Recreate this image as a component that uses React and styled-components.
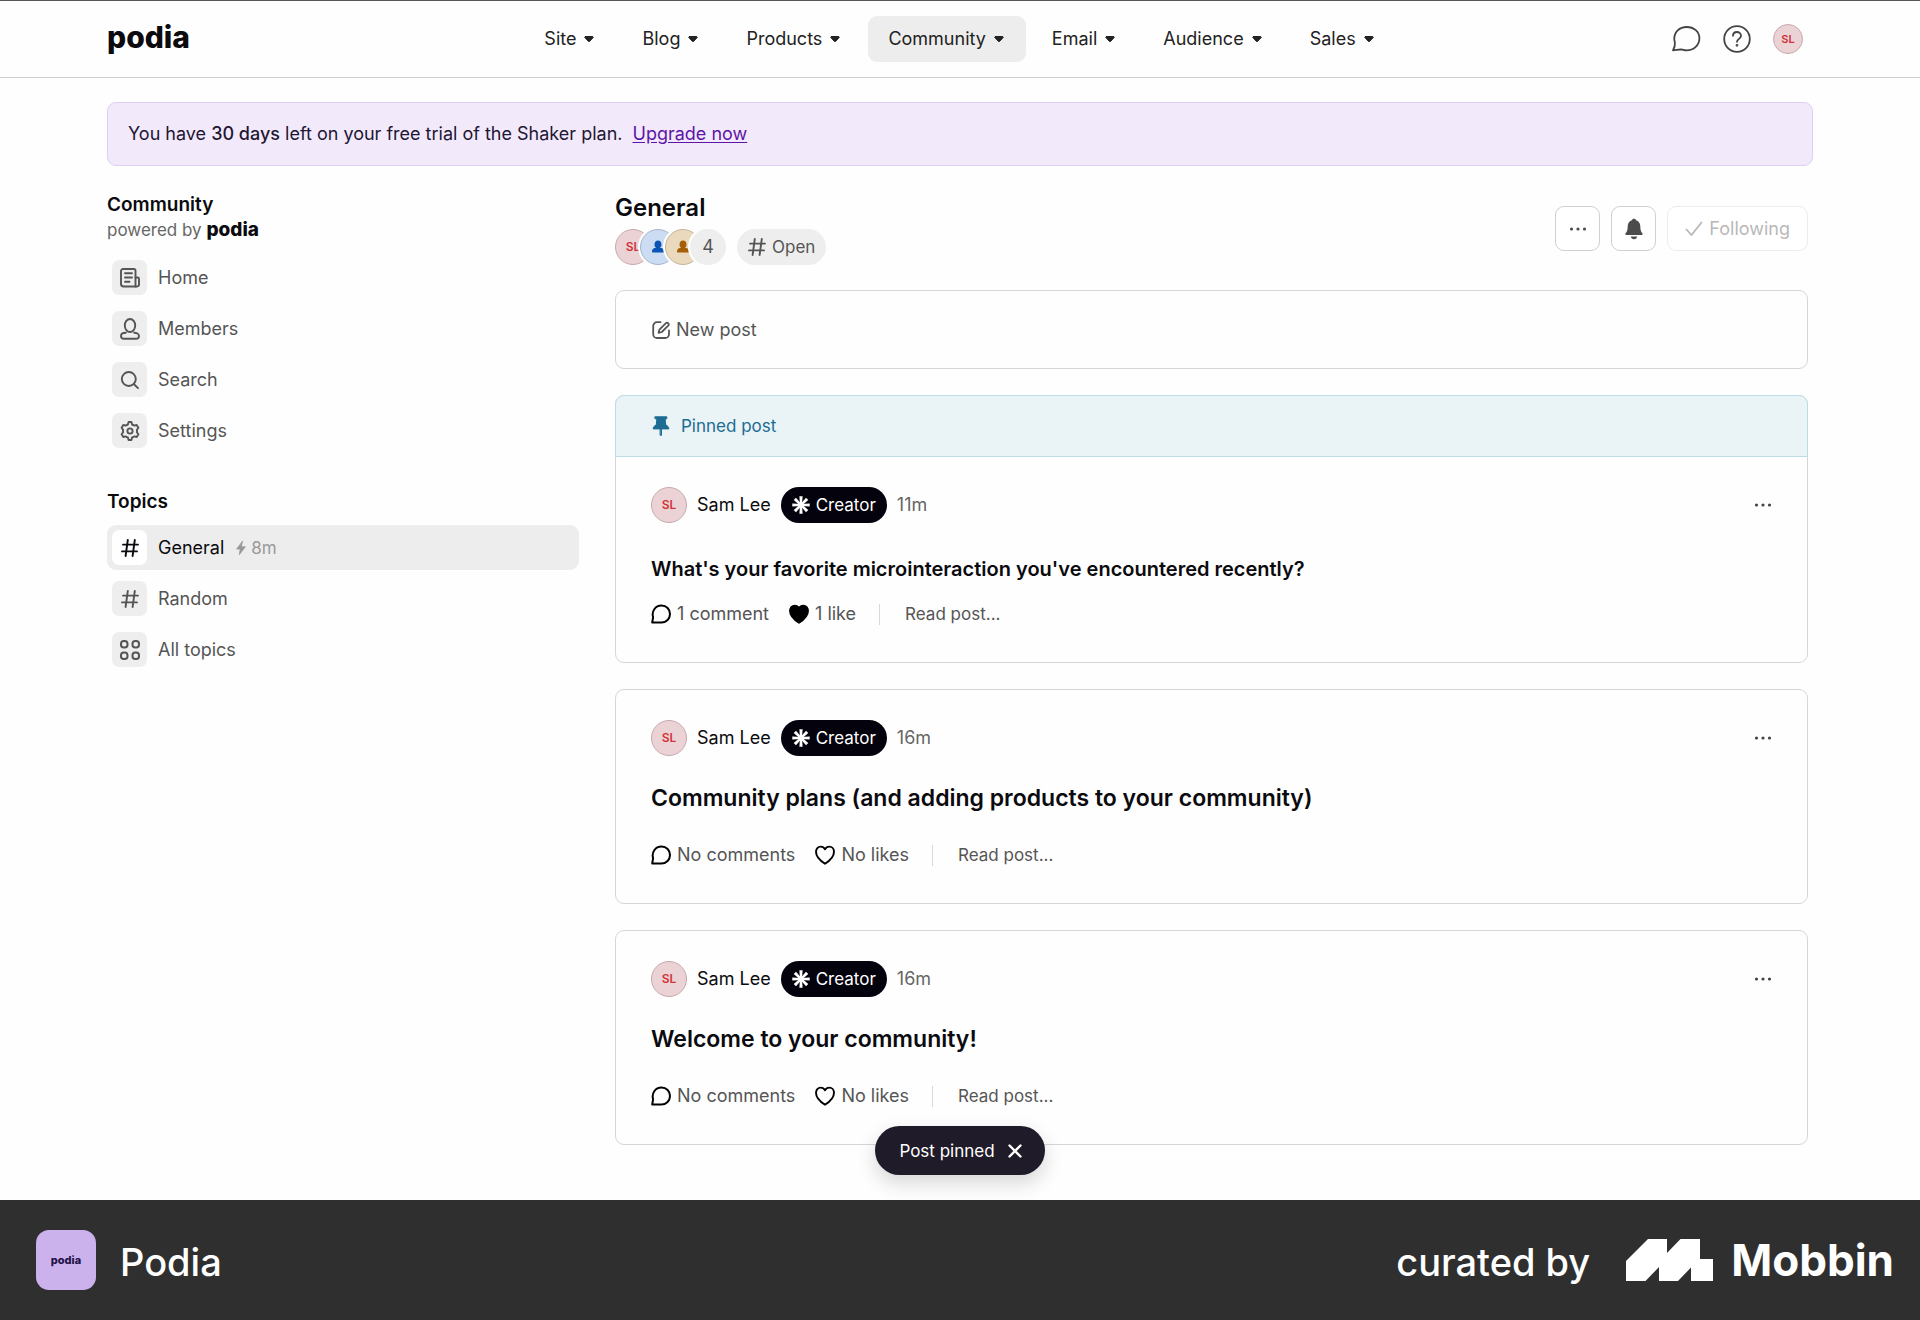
import React, { useState } from "react";
import styled, { createGlobalStyle } from "styled-components";

const Svg = ({ w = 24, h = w, box = "0 0 24 24", sw = 2, children }) => (
  <svg
    width={w}
    height={h}
    viewBox={box}
    fill="none"
    stroke="currentColor"
    strokeWidth={sw}
    strokeLinecap="round"
    strokeLinejoin="round"
    aria-hidden="true"
  >
    {children}
  </svg>
);

const CaretIcon = () => (
  <Svg w={10} h={8} box="0 0 10 8" sw={1}>
    <path fill="currentColor" d="M1.6 1.500h6.800c.7 0 1 .6.7 1.100L5.600 6.400c-.4.4-.9.4-1.200 0L.9 2.600C.6 2.100.9 1.500 1.600 1.500z" />
  </Svg>
);

const ChatIcon = () => (
  <Svg w={30} h={28} box="0 0 30 28" sw={1.8}>
    <path d="M3.3 14.3C3 7 8.5 2 15.7 2c7.2 0 12.7 4.6 12.7 11.2 0 6.9-5.6 12.2-12.9 12.2-2.3 0-3.4-.8-5.3-.9-2.3-.1-4.9.6-8.2.9 1.7-3.3 2.2-4.6 1.9-7.3-.1-1.300-.5-2.100-.6-3.800z" />
  </Svg>
);

const HelpIcon = () => (
  <Svg w={28} box="0 0 28 28" sw={1.8}>
    <circle cx="14" cy="14" r="12.8" />
    <path d="M10 10.8c0-2.200 1.700-3.800 4-3.800s4 1.600 4 3.700c0 3-4 3.300-4 6.100" />
    <circle cx="14" cy="20.300" r=".5" fill="currentColor" />
  </Svg>
);

const NewsIcon = () => (
  <Svg w={20} box="0 0 20 20" sw={1.9}>
    <path d="M3 1h11a1.500 1.500 0 0 1 1.500 1.500V18.500H3.500A2.500 2.500 0 0 1 1 16V3a2 2 0 0 1 2-2z" />
    <path d="M15.500 9.500h2a1.500 1.500 0 0 1 1.500 1.500v5a2 2 0 0 1-2 2.500h-1.500" />
    <path d="M5 5.300h7M5 9.500h7M5 13.700h4.500" />
  </Svg>
);

const MemberIcon = () => (
  <Svg w={20} h={22} box="0 0 20 22" sw={1.9}>
    <ellipse cx="10" cy="7.500" rx="5.200" ry="6.500" />
    <path d="M5.800 14.800C3.500 14.800 1 15.700 1 18c0 1.800 1 2.800 3 2.800h12c2 0 3-1 3-2.800 0-2.300-2.500-3.200-4.800-3.200" />
  </Svg>
);

const SearchIcon = () => (
  <Svg w={20} box="0 0 20 20" sw={1.9}>
    <circle cx="8.800" cy="9" r="7" />
    <path d="M14 14.200l4 3.900" />
  </Svg>
);

const GearIcon = () => (
  <Svg w={20} box="0 0 20 20" sw={1.9}>
    <circle cx="10" cy="10" r="2.600" />
    <path d="M8.600 1h2.800l.7 2.500c.9.300 1.400.6 2.100 1.100l2.500-.6 1.700 2.700-1.500 2c.2 1 .2 1.600 0 2.600l1.500 2-1.700 2.700-2.500-.6c-.7.500-1.200.8-2.100 1.100L11.400 19H8.600l-.7-2.500c-.9-.3-1.400-.6-2.100-1.100l-2.500.6-1.700-2.700 1.500-2c-.2-1-.2-1.600 0-2.600l-1.500-2L3.300 4l2.500.6c.7-.5 1.200-.8 2.100-1.100z" />
  </Svg>
);

const HashIcon = () => (
  <Svg w={18} box="0 0 18 18" sw={1.9}>
    <path d="M6.800 1L4.600 17M13.800 1l-2.200 16M2 5.600h15M1 12.400h15" />
  </Svg>
);

const TopicsIcon = () => (
  <Svg w={20} box="0 0 20 20" sw={2}>
    <rect x="1" y="1" width="6.500" height="6.500" rx="2.800" />
    <rect x="12.500" y="1" width="6.500" height="6.500" rx="2.800" />
    <rect x="1" y="12.500" width="6.500" height="6.500" rx="2.800" />
    <rect x="12.500" y="12.500" width="6.500" height="6.500" rx="2.800" />
  </Svg>
);

const BoltIcon = () => (
  <Svg w={10} h={14} box="0 0 10 14" sw={0.8}>
    <path fill="currentColor" d="M6.300.4L.6 8h3.600l-.8 5.600L9.400 5.800H5.600z" />
  </Svg>
);

const DotsIcon = () => (
  <Svg w={18} h={4} box="0 0 18 4" sw={0}>
    <g fill="currentColor">
      <circle cx="2.500" cy="2" r="1.600" />
      <circle cx="9" cy="2" r="1.600" />
      <circle cx="15.500" cy="2" r="1.600" />
    </g>
  </Svg>
);

const BellIcon = () => (
  <Svg w={18} h={22} box="0 0 18 22" sw={0}>
    <path
      fill="currentColor"
      d="M9 .8c1 0 1.800.6 2.100 1.400 2.500.8 4.200 3 4.200 5.900 0 3.900.6 5.500 2.100 7.200.6.700.2 1.600-.6 1.600H1.200c-.8 0-1.200-.9-.6-1.600 1.500-1.700 2.100-3.300 2.100-7.200 0-2.900 1.700-5.100 4.200-5.900C7.200 1.400 8 .8 9 .8zM5.800 18.500h6.400c-.2 1.600-1.500 2.700-3.200 2.700s-3-1.100-3.200-2.700z"
    />
  </Svg>
);

const CheckIcon = () => (
  <Svg w={18} h={16} box="0 0 18 16" sw={1.8}>
    <path d="M1.500 8.500l5 5.500L16.500 1.500" />
  </Svg>
);

const ComposeIcon = () => (
  <Svg w={18} box="0 0 18 18" sw={1.8}>
    <path d="M8.500 1.200H5A3.800 3.800 0 0 0 1.200 5v8.200A3.800 3.800 0 0 0 5 17h8.200a3.800 3.800 0 0 0 3.800-3.800V9.500" />
    <path d="M6.600 11.800l.8-3.200 6.300-6.300a1.700 1.700 0 0 1 2.500 2.400L9.800 11z" />
  </Svg>
);

const PinIcon = () => (
  <Svg w={18} h={20} box="0 0 18 20" sw={1}>
    <path fill="currentColor" d="M3.200.8h11.600v1.800l-1.600.9.500 5.500c2 .7 3 2 3.200 3.900H1.100C1.300 11 2.300 9.700 4.300 9l.5-5.500-1.600-.9zM8.500 13h1v6.300h-1z" />
  </Svg>
);

const StarIcon = () => (
  <Svg w={18} box="0 0 18 18" sw={0}>
    <g fill="currentColor">
      {[0, 45, 90, 135, 180, 225, 270, 315].map((deg) => (
        <path key={deg} transform={`rotate(${deg} 9 9)`} d="M8 9L7.400.3h3.200L10 9z" />
      ))}
    </g>
  </Svg>
);

const CommentIcon = () => (
  <Svg w={20} box="0 0 20 20" sw={2}>
    <path d="M1.200 18.500l.9-5.200C.3 7.500 4.300 1.600 10.500 1.600c5 0 8.500 3.800 8.500 8.400 0 4.700-3.600 8.500-8.500 8.500z" />
  </Svg>
);

const HeartIcon = ({ filled }) => (
  <Svg w={20} box="0 0 20 20" sw={1.9}>
    <path
      fill={filled ? "currentColor" : "none"}
      d="M10 18.800C7 16.900 1 12.300 1 6.800 1 3.900 3 1.600 5.600 1.600c2 0 3.600 1.100 4.400 2.600.8-1.500 2.400-2.600 4.400-2.600C17 1.600 19 3.900 19 6.800c0 5.500-6 10.100-9 12z"
    />
  </Svg>
);

const PersonIcon = () => (
  <Svg w={12} h={13} box="0 0 12 13" sw={0}>
    <path
      fill="currentColor"
      d="M6 .5c2 0 3.500 1.600 3.500 4 0 1.500-.6 2.700-1.500 3.500h1.500c1.500.3 2.500 1.700 2.500 3.500 0 .6-.4 1-1 1H1c-.6 0-1-.4-1-1C0 9.700 1 8.300 2.500 8H4c-.9-.8-1.500-2-1.500-3.500 0-2.400 1.500-4 3.500-4z"
    />
  </Svg>
);

const CloseIcon = () => (
  <Svg w={14} box="0 0 14 14" sw={2.4}>
    <path d="M1.500 1.500l11 11M12.500 1.500l-11 11" />
  </Svg>
);

const MobbinMark = () => (
  <Svg w={87} h={42} box="0 0 87 42" sw={0}>
    <path fill="currentColor" d="M22 0h19v14L54.500 0H74v20h13v22H65V28.500L52 42H33V28L19.500 42H0V22z" />
  </Svg>
);

const navItems = ["Site", "Blog", "Products", "Community", "Email", "Audience", "Sales"];

const communityLinks = [
  { label: "Home", icon: <NewsIcon /> },
  { label: "Members", icon: <MemberIcon /> },
  { label: "Search", icon: <SearchIcon /> },
  { label: "Settings", icon: <GearIcon /> },
];

const topicLinks = [
  { label: "General", icon: <HashIcon />, active: true, activity: "8m" },
  { label: "Random", icon: <HashIcon /> },
  { label: "All topics", icon: <TopicsIcon /> },
];

const posts = [
  {
    id: 1,
    pinned: true,
    time: "11m",
    title: "What's your favorite microinteraction you've encountered recently?",
    comments: "1 comment",
    likes: "1 like",
    liked: true,
  },
  {
    id: 2,
    time: "16m",
    title: "Community plans (and adding products to your community)",
    comments: "No comments",
    likes: "No likes",
  },
  {
    id: 3,
    time: "16m",
    title: "Welcome to your community!",
    comments: "No comments",
    likes: "No likes",
  },
];

const SideList = ({ items }) => (
  <List>
    {items.map((item) => (
      <li key={item.label}>
        <SideLink href="#" $active={item.active}>
          <IconTile $active={item.active}>{item.icon}</IconTile>
          {item.label}
          {item.activity && (
            <Activity>
              <BoltIcon />
              {item.activity}
            </Activity>
          )}
        </SideLink>
      </li>
    ))}
  </List>
);

const Post = ({ post }) => (
  <Card>
    {post.pinned && (
      <PinnedBar>
        <PinIcon />
        Pinned post
      </PinnedBar>
    )}
    <PostBody>
      <PostHead>
        <Avatar>SL</Avatar>
        <Author>Sam Lee</Author>
        <Badge>
          <StarIcon />
          Creator
        </Badge>
        <Time>{post.time}</Time>
        <MoreButton type="button" aria-label="Post options">
          <DotsIcon />
        </MoreButton>
      </PostHead>
      <PostTitle $compact={post.pinned}>{post.title}</PostTitle>
      <Stats>
        <StatButton type="button">
          <CommentIcon />
          {post.comments}
        </StatButton>
        <StatButton type="button">
          <HeartIcon filled={post.liked} />
          {post.likes}
        </StatButton>
        <ReadLink href="#">Read post...</ReadLink>
      </Stats>
    </PostBody>
  </Card>
);

const App = () => {
  const [toast, setToast] = useState(true);

  return (
    <>
      <GlobalStyle />
      <Screen>
        <Header>
          <Logo href="#">podia</Logo>
          <Nav>
            {navItems.map((item) => (
              <NavButton type="button" key={item} $active={item === "Community"}>
                {item}
                <CaretIcon />
              </NavButton>
            ))}
          </Nav>
          <HeaderTools>
            <PlainButton type="button" aria-label="Messages">
              <ChatIcon />
            </PlainButton>
            <PlainButton type="button" aria-label="Help">
              <HelpIcon />
            </PlainButton>
            <Avatar $size={30} $text={11}>
              SL
            </Avatar>
          </HeaderTools>
        </Header>

        <Content>
          <Banner>
            <span>
              You have <strong>30 days</strong> left on your free trial of the Shaker plan.
            </span>
            <a href="#">Upgrade now</a>
          </Banner>

          <Columns>
            <aside>
              <SideTitle>Community</SideTitle>
              <Powered>
                powered by <strong>podia</strong>
              </Powered>
              <SideList items={communityLinks} />
              <TopicsTitle>Topics</TopicsTitle>
              <SideList items={topicLinks} />
            </aside>

            <Main>
              <TopicHead>
                <div>
                  <TopicTitle>General</TopicTitle>
                  <TopicMeta>
                    <AvatarStack>
                      <Avatar>SL</Avatar>
                      <Avatar $bg="#cbdcf3" $line="#a5b5cb" $color="#0b55b5">
                        <PersonIcon />
                      </Avatar>
                      <Avatar $bg="#ead9bd" $line="#c4b59b" $color="#a45f06">
                        <PersonIcon />
                      </Avatar>
                      <Count>4</Count>
                    </AvatarStack>
                    <OpenPill>
                      <HashIcon />
                      Open
                    </OpenPill>
                  </TopicMeta>
                </div>
                <Actions>
                  <ActionButton type="button" aria-label="More">
                    <DotsIcon />
                  </ActionButton>
                  <ActionButton type="button" aria-label="Notifications">
                    <BellIcon />
                  </ActionButton>
                  <ActionButton type="button" $wide disabled>
                    <CheckIcon />
                    Following
                  </ActionButton>
                </Actions>
              </TopicHead>

              <NewPost type="button">
                <ComposeIcon />
                New post
              </NewPost>
              {posts.map((post) => (
                <Post key={post.id} post={post} />
              ))}
            </Main>
          </Columns>

          {toast && (
            <ToastLayer>
              <Toast role="status">
                Post pinned
                <PlainButton type="button" aria-label="Dismiss" onClick={() => setToast(false)}>
                  <CloseIcon />
                </PlainButton>
              </Toast>
            </ToastLayer>
          )}
        </Content>

        <Footer>
          <AppTile>podia</AppTile>
          <AppName>Podia</AppName>
          <Curated>curated by</Curated>
          <MobbinMark />
          <Mobbin>Mobbin</Mobbin>
        </Footer>
      </Screen>
    </>
  );
};

export default App;

const GlobalStyle = createGlobalStyle`
  * {
    box-sizing: border-box;
  }
  body {
    margin: 0;
    background: #fefefe;
    color: #0b0b0f;
    font-family: Inter, "Liberation Sans", sans-serif;
    font-size: 18px;
    line-height: 24px;
  }
  h1, h2, p, ul {
    margin: 0;
    padding: 0;
  }
  button {
    font: inherit;
    color: inherit;
    cursor: pointer;
  }
  svg {
    display: block;
    flex-shrink: 0;
  }
`;

const Screen = styled.div`
  display: flex;
  flex-direction: column;
  min-height: 100vh;
`;

const Header = styled.header`
  display: grid;
  grid-template-columns: 1fr auto 1fr;
  align-items: center;
  height: 78px;
  padding: 0 107px;
  border-top: 1px solid #58555b;
  border-bottom: 1px solid #d0d0d0;
`;

const Logo = styled.a`
  justify-self: start;
  padding-bottom: 4px;
  color: #0b0b0f;
  font-size: 30px;
  font-weight: 800;
  line-height: 36px;
  text-decoration: none;
`;

const Nav = styled.nav`
  display: flex;
  gap: 6px;
`;

const NavButton = styled.button`
  display: flex;
  align-items: center;
  gap: 8px;
  height: 46px;
  padding: 0 22px 0 20px;
  border: 0;
  border-radius: 9px;
  background: ${(props) => (props.$active ? "#ededed" : "transparent")};
  color: #222;
`;

const HeaderTools = styled.div`
  display: flex;
  align-items: center;
  justify-content: flex-end;
  gap: 22px;
  padding-right: 10px;
`;

const PlainButton = styled.button`
  padding: 0;
  border: 0;
  background: none;

  ${HeaderTools} & {
    color: #444;
  }
`;

const Avatar = styled.span`
  display: flex;
  align-items: center;
  justify-content: center;
  flex-shrink: 0;
  width: ${(props) => props.$size || 36}px;
  height: ${(props) => props.$size || 36}px;
  border: 1px solid ${(props) => props.$line || "#c6a9ae"};
  border-radius: 50%;
  background: ${(props) => props.$bg || "#ebd2d5"};
  color: ${(props) => props.$color || "#d0343a"};
  font-size: ${(props) => props.$text || 12}px;
  font-weight: 600;
`;

const Content = styled.div`
  position: relative;
  flex: 1;
  padding: 24px 107px 55px;
`;

const Banner = styled.div`
  display: flex;
  align-items: center;
  gap: 10px;
  height: 64px;
  padding: 0 20px;
  border: 1px solid #dccff3;
  border-radius: 9px;
  background: #f2eafb;
  color: #1f1633;

  strong {
    font-weight: 500;
  }
  a {
    color: #5f14a8;
    text-underline-offset: 2px;
  }
`;

const Columns = styled.div`
  display: grid;
  grid-template-columns: 472px minmax(0, 1fr);
  gap: 36px;
  padding: 27px 5px 0 0;
`;

const SideTitle = styled.h2`
  font-size: 19px;
  font-weight: 600;
  line-height: 24px;
`;

const TopicsTitle = styled(SideTitle)`
  margin: 37px 0 11px;
`;

const Powered = styled.p`
  margin-bottom: 12px;
  color: #666;
  font-size: 17px;
  line-height: 26px;

  strong {
    color: #0b0b0f;
    font-size: 19px;
    font-weight: 800;
  }
`;

const List = styled.ul`
  display: flex;
  flex-direction: column;
  gap: 6px;
  list-style: none;
`;

const SideLink = styled.a`
  display: flex;
  align-items: center;
  gap: 11px;
  height: 45px;
  padding: 0 5px;
  border-radius: 9px;
  background: ${(props) => (props.$active ? "#ededed" : "transparent")};
  color: ${(props) => (props.$active ? "#0b0b0f" : "#555")};
  text-decoration: none;
`;

const IconTile = styled.span`
  display: flex;
  align-items: center;
  justify-content: center;
  width: 35px;
  height: 35px;
  border-radius: 7px;
  background: ${(props) => (props.$active ? "#fff" : "#eee")};
`;

const Activity = styled.span`
  display: flex;
  align-items: center;
  gap: 5px;
  margin-left: 1px;
  color: #999;
  font-size: 17px;
`;

const Main = styled.main`
  display: flex;
  flex-direction: column;
  gap: 26px;
`;

const TopicHead = styled.div`
  display: flex;
  align-items: center;
  justify-content: space-between;
  height: 71px;
`;

const TopicTitle = styled.h1`
  margin-bottom: 6px;
  font-size: 24px;
  font-weight: 600;
  line-height: 30px;
`;

const TopicMeta = styled.div`
  display: flex;
  align-items: center;
  gap: 11px;
`;

const AvatarStack = styled.div`
  display: flex;

  > * {
    box-shadow: 0 0 0 2px #fefefe;
  }
  > * + * {
    margin-left: -11px;
  }
`;

const Count = styled.span`
  width: 36px;
  height: 36px;
  border-radius: 50%;
  background: #eee;
  color: #555;
  line-height: 36px;
  text-align: center;
`;

const OpenPill = styled.span`
  display: flex;
  align-items: center;
  gap: 6px;
  height: 36px;
  padding: 0 11px;
  border-radius: 18px;
  background: #eee;
  color: #555;
  font-size: 17px;
`;

const Actions = styled.div`
  display: flex;
  gap: 11px;
`;

const ActionButton = styled.button`
  display: flex;
  align-items: center;
  justify-content: center;
  gap: 6px;
  min-width: 45px;
  height: 45px;
  padding: ${(props) => (props.$wide ? "0 17px" : "0")};
  border: 1px solid ${(props) => (props.$wide ? "#ececec" : "#d0d0d0")};
  border-radius: 9px;
  background: #fff;
  color: ${(props) => (props.$wide ? "#b8b8b8" : "#4c4c4c")};
`;

const Card = styled.article`
  border: 1px solid #d4d6d8;
  border-radius: 9px;
  background: #fefefe;
`;

const NewPost = styled.button`
  display: flex;
  align-items: center;
  gap: 6px;
  height: 79px;
  padding: 0 36px;
  border: 1px solid #d4d6d8;
  border-radius: 9px;
  background: #fefefe;
  color: #555;
`;

const PinnedBar = styled.div`
  display: flex;
  align-items: center;
  gap: 11px;
  height: 62px;
  margin: -1px -1px 0;
  padding: 0 36px;
  border: 1px solid #bddde5;
  border-radius: 9px 9px 0 0;
  background: #eaf3f6;
  color: #1c6c93;
  font-size: 17px;
`;

const PostBody = styled.div`
  padding: 30px 35px 36px;
`;

const PostHead = styled.div`
  display: flex;
  align-items: center;
  gap: 10px;
  height: 36px;
`;

const Author = styled.span`
  color: #0b0b0f;
`;

const Badge = styled.span`
  display: flex;
  align-items: center;
  gap: 6px;
  height: 36px;
  padding: 0 11px;
  border-radius: 18px;
  background: #04020c;
  color: #fff;
  font-size: 17px;
`;

const Time = styled.span`
  color: #666;
`;

const MoreButton = styled.button`
  margin-left: auto;
  padding: 8px 0;
  border: 0;
  background: none;
  color: #444;
`;

const PostTitle = styled.h2`
  margin: ${(props) => (props.$compact ? "33px 0 20px" : "27px 0 30px")};
  font-size: ${(props) => (props.$compact ? 20 : 23)}px;
  font-weight: 600;
  line-height: ${(props) => (props.$compact ? 26 : 30)}px;
`;

const Stats = styled.div`
  display: flex;
  align-items: center;
  gap: 20px;
`;

const StatButton = styled.button`
  display: flex;
  align-items: center;
  gap: 6px;
  padding: 0;
  border: 0;
  background: none;
  color: #555;

  svg {
    color: #000;
  }
`;

const ReadLink = styled.a`
  display: flex;
  align-items: center;
  color: #555;
  font-size: 17px;
  text-decoration: none;

  &::before {
    content: "";
    width: 1px;
    height: 21px;
    margin: 0 25px 0 3px;
    background: #d8d8d8;
  }
`;

const ToastLayer = styled.div`
  position: absolute;
  right: 0;
  bottom: 25px;
  left: 0;
  display: flex;
  justify-content: center;
`;

const Toast = styled.div`
  display: flex;
  align-items: center;
  gap: 13px;
  height: 49px;
  padding: 0 23px 0 24px;
  border-radius: 25px;
  background: #1f1b28;
  box-shadow: 0 8px 20px rgba(0, 0, 0, 0.16);
  color: #fff;
  font-size: 17px;
`;

const Footer = styled.footer`
  display: flex;
  align-items: center;
  height: 120px;
  padding: 0 26px 0 36px;
  background: #2f2f2f;
  color: #fff;
`;

const AppTile = styled.span`
  display: flex;
  align-items: center;
  justify-content: center;
  width: 60px;
  height: 60px;
  border-radius: 13px;
  background: #ccb2ec;
  color: #23124a;
  font-size: 11px;
  font-weight: 800;
`;

const AppName = styled.span`
  margin-left: 24px;
  padding-top: 3px;
  font-size: 38px;
  font-weight: 500;
  line-height: 48px;
`;

const Curated = styled(AppName)`
  margin: 0 36px 0 auto;
`;

const Mobbin = styled.span`
  margin-left: 18px;
  font-size: 44px;
  font-weight: 700;
  line-height: 54px;
`;
